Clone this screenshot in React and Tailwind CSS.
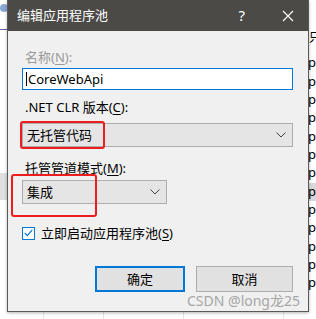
import React from 'react';

const font = { fontFamily: '"Noto Sans", "Noto Sans CJK SC", sans-serif' };

// rows of the list window peeking out on the right
const rightRows = [63, 82, 100, 118, 137, 155, 173, 192, 210, 228, 247, 265, 283];

const Chevron = () => (
  <svg width="10" height="6" viewBox="0 0 10 6" className="shrink-0">
    <path d="M0.5 0.5 L5 5 L9.5 0.5" fill="none" stroke="#444" strokeWidth="1" />
  </svg>
);

const Select = ({ value, className }) => (
  <div className={`flex h-[24px] items-center justify-between border border-[#adadad] bg-[#e5e5e5] pl-[4px] pr-[6px] ${className}`}>
    <span className="text-[13px] leading-none text-black">{value}</span>
    <Chevron />
  </div>
);

const Underline = ({ children }) => <span className="underline underline-offset-2">{children}</span>;

export default function App() {
  return (
    <div className="relative h-[319px] w-[316px] overflow-hidden bg-white" style={font}>
      {/* window behind the dialog */}
      <div className="absolute left-0 top-[4px] h-[8px] w-[8px] rounded-sm bg-[#8aa7d6]" />
      <div className="absolute left-0 top-[29px] h-px w-[8px] bg-[#6d5fa3]" />
      <div className="absolute left-0 top-[173px] h-[27px] w-[8px] bg-[#e0e0e0]" />
      <div className="absolute left-[308px] top-[183px] h-[18px] w-[8px] bg-[#d9d9d9]" />
      <div className="absolute left-[309px] top-[32px] text-[12px] leading-none text-black">只</div>
      {rightRows.map((y) => (
        <div key={y} className="absolute left-[308px] text-[13px] leading-none text-black" style={{ top: y - 7 }}>
          pl
        </div>
      ))}
      {[43, 103, 183, 283].map((x) => (
        <div key={x} className="absolute top-[312px] h-[7px] w-px bg-[#e6e6e6]" style={{ left: x }} />
      ))}

      {/* dialog */}
      <div className="absolute left-[7px] top-0 flex h-[312px] w-[302px] flex-col border border-t-0 border-[#5a5a5a] bg-[#f0f0f0] shadow-[0_1px_3px_rgba(0,0,0,0.3)]">
        <div className="flex h-[31px] shrink-0 items-center bg-[#4b4a47] pl-[9px] pr-[14px] text-white">
          <span className="text-[13px] leading-none">编辑应用程序池</span>
          <span className="ml-auto mr-[37px] text-[15px] leading-none">?</span>
          <svg width="12" height="12" viewBox="0 0 12 12">
            <path d="M1 1 L11 11 M11 1 L1 11" stroke="#fff" strokeWidth="1.2" />
          </svg>
        </div>

        <div className="flex flex-1 flex-col pl-[14px] pr-[15px] text-[13px] text-black">
          <div className="mt-[18px] pl-[3px] leading-[16px] text-[#9a9a9a]">
            名称(<Underline>N</Underline>):
          </div>
          <div className="mt-[3px] flex h-[22px] items-center border border-[#0078d7] bg-white pl-[3px]">
            <span className="mr-px h-[14px] w-px bg-black" />
            <span className="leading-none">CoreWebApi</span>
          </div>

          <div className="mt-[9px] pl-[3px] leading-[16px]">
            .NET CLR 版本(<Underline>C</Underline>):
          </div>
          <div className="relative mt-[8px]">
            <Select value="无托管代码" />
            <div className="absolute -left-[2px] -top-[2px] h-[28px] w-[85px] rounded-[3px] border-2 border-[#ee1c1c]" />
          </div>

          <div className="mt-[13px] pl-[3px] leading-[16px]">
            托管管道模式(<Underline>M</Underline>):
          </div>
          <div className="relative mt-[4px]">
            <Select value="集成" className="w-[145px]" />
            <div className="absolute -left-[11px] -top-[6px] h-[43px] w-[86px] rounded-[3px] border-2 border-[#ee1c1c]" />
          </div>

          <label className="mt-[21px] flex items-center">
            <span className="flex h-[13px] w-[13px] items-center justify-center border border-[#0078d7] bg-white">
              <svg width="9" height="8" viewBox="0 0 9 8">
                <path d="M0.8 4 L3.3 6.6 L8.3 0.8" fill="none" stroke="#0078d7" strokeWidth="1.2" />
              </svg>
            </span>
            <span className="ml-[6px] leading-[16px]">
              立即启动应用程序池(<Underline>S</Underline>)
            </span>
          </label>

          <div className="mt-[25px] flex justify-end gap-[11px]">
            <button className="h-[26px] w-[90px] border-2 border-[#0078d7] bg-[#e1e1e1] text-[13px] leading-none">
              确定
            </button>
            <button className="h-[26px] w-[97px] border border-[#adadad] bg-[#e1e1e1] text-[13px] leading-none">
              取消
            </button>
          </div>

          <div className="-mr-[7px] self-end text-[14px] leading-[18px] text-[#a6a6a6]">CSDN @long龙25</div>
        </div>
      </div>
    </div>
  );
}
